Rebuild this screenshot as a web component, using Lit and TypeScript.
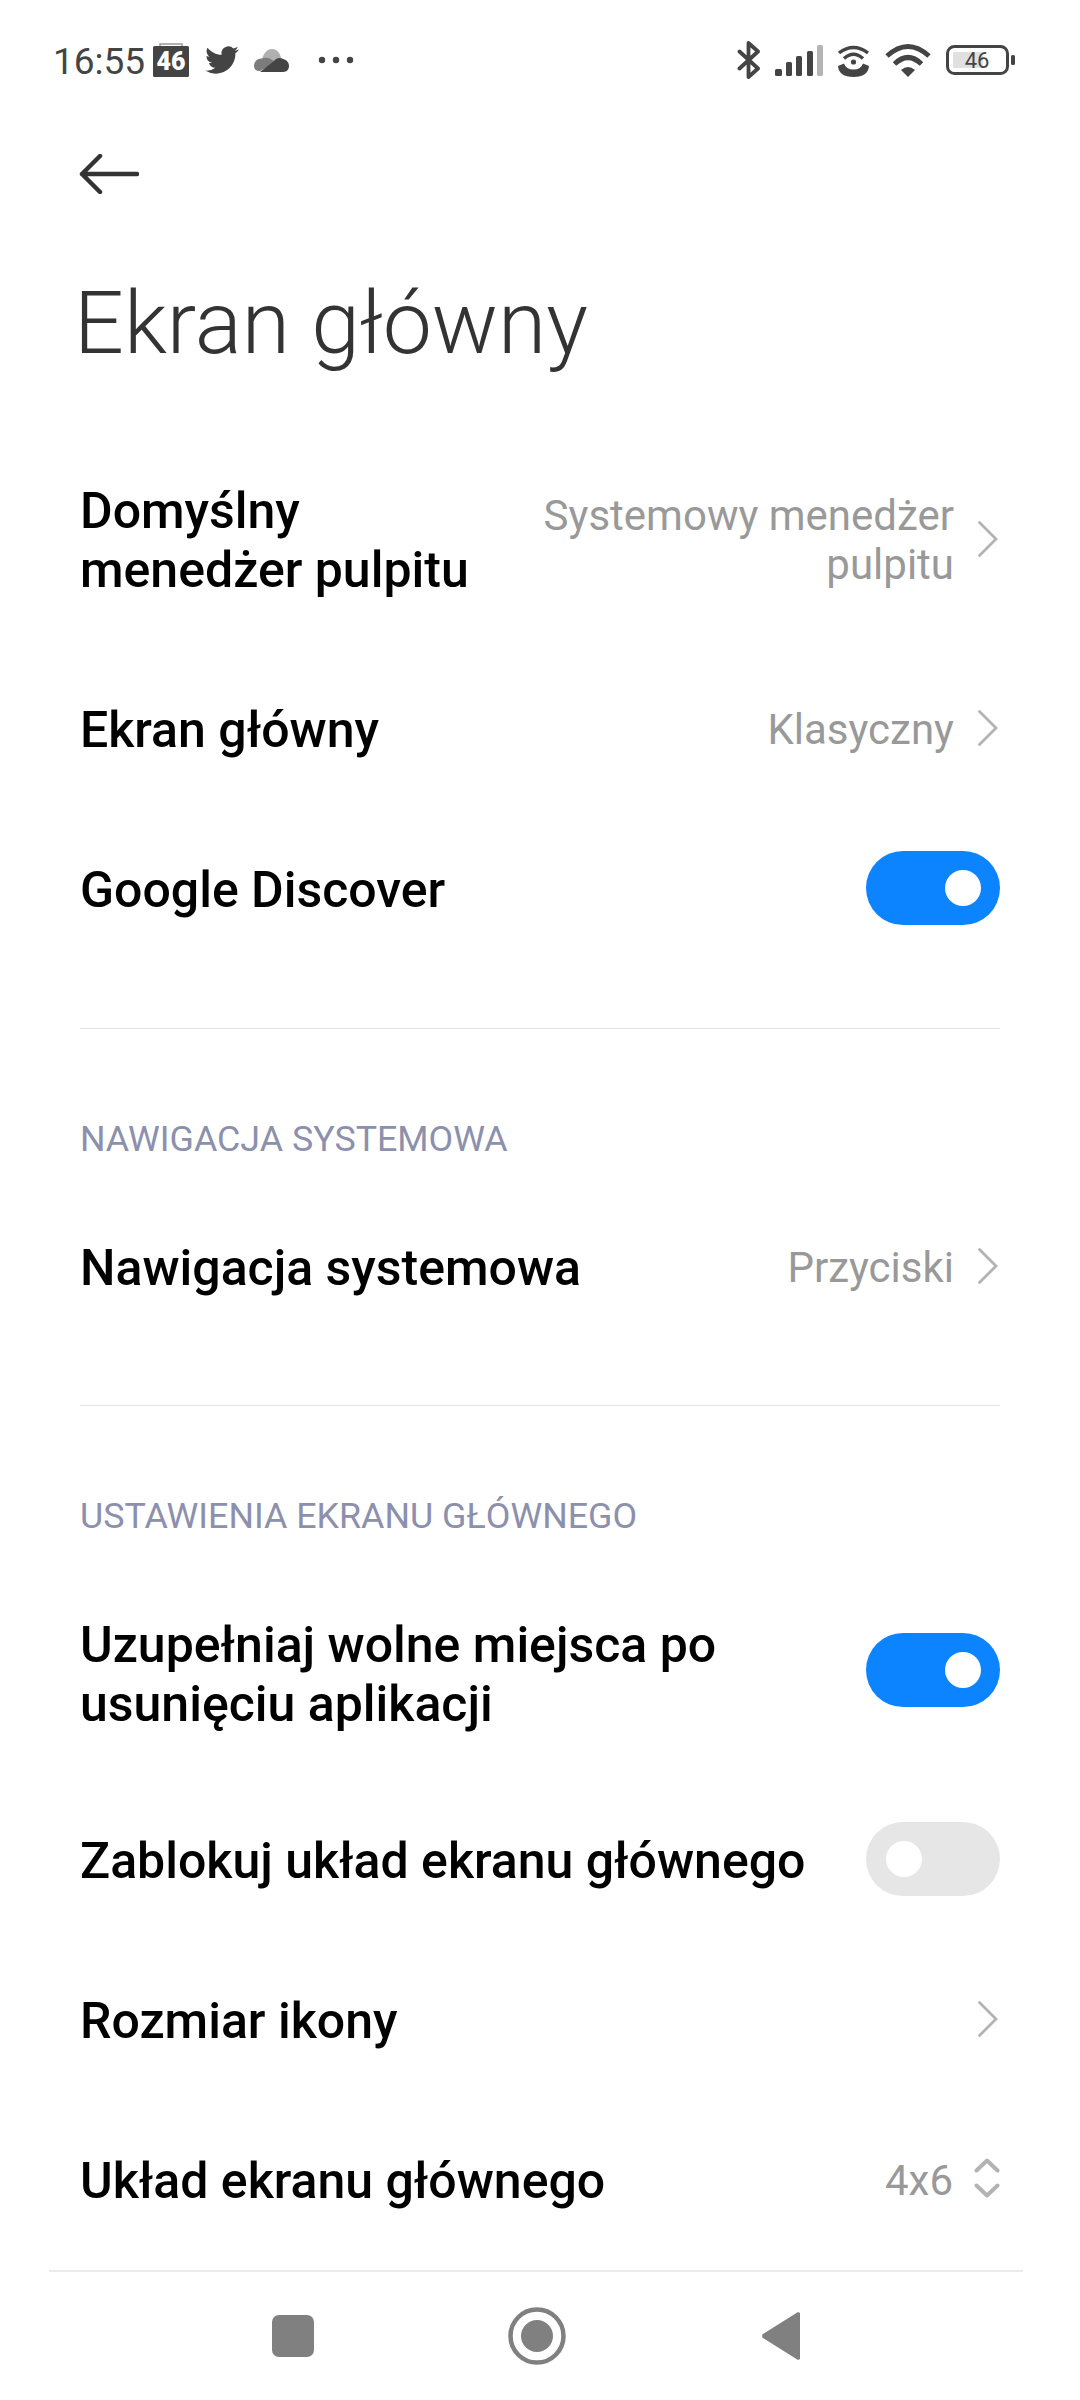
import { LitElement, css, html, svg } from 'lit';
import { customElement } from 'lit/decorators.js';

const chevron = html`<svg class="chev" viewBox="0 0 20 36" fill="none">
  <path d="M1.5 1.5 L18 18 L1.5 34.5" stroke="#b3b3b3" stroke-width="2.8" stroke-linecap="round" />
</svg>`;

const updown = html`<svg class="updown" viewBox="0 0 26 42" fill="none">
  <path d="M2.500 13.500 L13 3.500 L23.500 13.500 M2.500 28.500 L13 38.500 L23.500 28.500" stroke="#b3b3b3" stroke-width="4" stroke-linecap="round" stroke-linejoin="round" />
</svg>`;

const toggle = (on: boolean) =>
  html`<span class="toggle ${on ? 'on' : 'off'}"><span class="knob"></span></span>`;

const row = (label: unknown, trailing: unknown, rowClass = '') => html`
  <div class="row ${rowClass}">
    <div class="label">${label}</div>
    <div class="trailing">${trailing}</div>
  </div>
`;

const value = (text: unknown) => html`<span class="value">${text}</span>`;

@customElement('app-root')
export class AppRoot extends LitElement {
  static styles = css`
    :host {
      display: flex;
      flex-direction: column;
      width: 1080px;
      height: 2400px;
      background: #fff;
      font-family: Roboto, 'Liberation Sans', sans-serif;
      overflow: hidden;
    }

    .status {
      display: flex;
      align-items: center;
      justify-content: space-between;
      height: 36px;
      margin-top: 42px;
      padding: 0 65px 0 53px;
      color: #444;
    }
    .status-side {
      display: flex;
      align-items: center;
    }
    .time {
      font-size: 37px;
      line-height: 36px;
      padding-top: 3px;
      margin-right: 8px;
    }
    .ic-cal { width: 36px; height: 34px; margin-right: 16px; }
    .ic-tw { width: 34px; height: 28px; margin-right: 15px; }
    .ic-cloud { width: 35px; height: 23px; margin-right: 29px; }
    .ic-dots { width: 36px; height: 8px; }
    .ic-bt { width: 25px; height: 38px; margin-right: 13px; }
    .ic-sig { width: 48px; height: 31px; margin-right: 14px; }
    .ic-hot { width: 33px; height: 33px; margin-right: 15px; }
    .ic-wifi { width: 46px; height: 34px; margin-right: 15px; }
    .ic-bat { width: 69px; height: 30px; }

    .back {
      display: block;
      width: 60px;
      height: 40px;
      margin: 76px 0 0 79px;
    }

    h1 {
      margin: 76px 0 0 74px;
      font-size: 87.700px;
      line-height: 106px;
      font-weight: 300;
      color: #333;
    }

    .list {
      flex: 1;
      margin-top: 54px;
    }

    .row {
      display: flex;
      align-items: center;
      justify-content: space-between;
      height: 160px;
      padding: 0 80px;
    }
    .row.tall {
      height: 218px;
    }
    .label {
      padding-top: 4px;
      font-size: 50px;
      line-height: 59px;
      font-weight: 500;
      color: #000;
    }
    .row.low .label {
      padding-top: 9px;
    }
    .trailing {
      display: flex;
      align-items: center;
      flex-shrink: 0;
    }
    .value {
      padding-top: 2px;
      font-size: 42px;
      line-height: 49px;
      color: #999;
      text-align: right;
    }
    .chev {
      width: 20px;
      height: 36px;
      margin: 0 2px 0 24px;
    }
    .updown {
      width: 26px;
      height: 42px;
      margin: 0 0 2px 21px;
    }

    .toggle {
      position: relative;
      display: block;
      width: 134px;
      height: 74px;
      border-radius: 37px;
    }
    .toggle.on { background: #0d84ff; }
    .toggle.off { background: #e6e6e6; }
    .knob {
      position: absolute;
      top: 19px;
      width: 36px;
      height: 36px;
      border-radius: 50%;
      background: #fff;
    }
    .on .knob { right: 19px; }
    .off .knob { left: 20px; }

    .divider {
      height: 1px;
      margin: 0 80px;
      background: #e3e3e3;
    }
    .divider.first {
      margin-top: 60px;
    }
    .divider.second {
      margin-top: 59px;
    }
    .header {
      padding: 0 80px;
      margin-top: 87px;
      margin-bottom: 24px;
      height: 46px;
      font-size: 35.800px;
      line-height: 46px;
      color: #8c90ad;
    }
    .header.tight {
      margin-bottom: 22px;
    }

    .nav-line {
      height: 2px;
      margin: 0 57px 0 49px;
      background: #ebebeb;
    }
    .nav {
      display: grid;
      grid-template-columns: repeat(3, 244px);
      justify-content: center;
      justify-items: center;
      align-items: center;
      height: 128px;
      padding-right: 6px;
    }
    .nav svg { display: block; }
  `;

  render() {
    return html`
      <div class="status">
        <div class="status-side">
          <span class="time">16:55</span>
          <svg class="ic-cal" viewBox="0 0 36 34">
            <path d="M7 3 V1 H29 V3" fill="none" stroke="#999" stroke-width="1.5" />
            <rect y="3" width="36" height="31" rx="1.5" fill="#444" />
            <text x="18" y="27" text-anchor="middle" font-family="Roboto" font-weight="900" font-size="25" fill="#fff">46</text>
          </svg>
          <svg class="ic-tw" viewBox="0 0 24 20">
            <path fill="#444" transform="translate(0 -2)" d="M23.953 4.57a10 10 0 01-2.825.775 4.958 4.958 0 002.163-2.723c-.951.555-2.005.959-3.127 1.184a4.92 4.92 0 00-8.384 4.482C7.69 8.095 4.067 6.13 1.64 3.162a4.822 4.822 0 00-.666 2.475c0 1.71.87 3.213 2.188 4.096a4.904 4.904 0 01-2.228-.616v.06a4.923 4.923 0 003.946 4.827 4.996 4.996 0 01-2.212.085 4.936 4.936 0 004.604 3.417 9.867 9.867 0 01-6.102 2.105c-.39 0-.779-.023-1.17-.067a13.995 13.995 0 007.557 2.209c9.053 0 13.998-7.496 13.998-13.985 0-.21 0-.42-.015-.63A9.935 9.935 0 0024 4.59z" />
          </svg>
          <svg class="ic-cloud" viewBox="0 0 35 23">
            <path fill="#b0b0b0" d="M8 10 C10 3 14 0 18 0 C23 0 26 4 27 9 L18 13Z" />
            <path fill="#7c7c7c" d="M0 17 C0 12 4 9 8 9.500 C12 8 15 9 18 11 L22 13 L6 22 C2 22 0 20 0 17Z" />
            <path fill="#454545" d="M6 23 L20 12 C22 9 26 8 29 10 C33 11 35 14 35 17 C35 20 33 23 29 23Z" />
          </svg>
          <svg class="ic-dots" viewBox="0 0 36 8" fill="#444">
            <circle cx="4" cy="4" r="3.200" />
            <circle cx="18" cy="4" r="3.200" />
            <circle cx="32" cy="4" r="3.200" />
          </svg>
        </div>
        <div class="status-side">
          <svg class="ic-bt" viewBox="0 0 25 38" fill="none">
            <path d="M2.500 10.500 L21 27.500 L11.500 36 V2 L21 10.500 L2.500 27.500" stroke="#444" stroke-width="3.800" stroke-linejoin="round" stroke-linecap="round" />
          </svg>
          <svg class="ic-sig" viewBox="0 0 48 31">
            ${[
              [0, 24, 7, 7, '#444'],
              [11, 17, 6, 14, '#444'],
              [21, 11, 6, 20, '#444'],
              [32, 6, 6, 25, '#444'],
              [42, 0, 6, 31, '#b5b5b5'],
            ].map(
              ([x, y, w, h, c]) =>
                svg`<rect x=${x} y=${y} width=${w} height=${h} rx="1.500" fill=${c} />`,
            )}
          </svg>
          <svg class="ic-hot" viewBox="0 0 33 33" fill="none">
            <path d="M2 9 Q16.500 -2 31 9 M7 14.500 Q16.500 6 26 14.500" stroke="#444" stroke-width="3.400" />
            <circle cx="16.500" cy="18" r="2.600" fill="#444" />
            <path fill="#444" d="M1 22 L7 19.500 Q9 25.500 16.500 25.500 Q24 25.500 26 19.500 L32 22 Q31 33 16.500 33 Q2 33 1 22Z" />
          </svg>
          <svg class="ic-wifi" viewBox="0 0 46 34" fill="none">
            <path d="M2 13 Q23 -6 44 13 M9.500 21 Q23 8 36.500 21" stroke="#444" stroke-width="5" />
            <path fill="#444" d="M23 34 L16 27 Q23 21 30 27Z" />
          </svg>
          <svg class="ic-bat" viewBox="0 0 69 30">
            <rect x="1.500" y="1.500" width="60" height="27" rx="7" fill="none" stroke="#444" stroke-width="3" />
            <rect x="7" y="7" width="30" height="16" rx="2" fill="#e0e0e0" />
            <text x="31" y="23" text-anchor="middle" font-family="Roboto" font-size="22" fill="#444">46</text>
            <rect x="65" y="10" width="4" height="10" rx="1.500" fill="#444" />
          </svg>
        </div>
      </div>

      <svg class="back" viewBox="0 0 60 40" fill="none">
        <path d="M21 2 L3 20 L21 38 M3 20 H58" stroke="#333" stroke-width="4.500" stroke-linecap="round" stroke-linejoin="round" />
      </svg>
      <h1>Ekran główny</h1>

      <div class="list">
        ${row(
          html`Domyślny<br />menedżer pulpitu`,
          html`${value(html`Systemowy menedżer<br />pulpitu`)}${chevron}`,
          'tall',
        )}
        ${row('Ekran główny', html`${value('Klasyczny')}${chevron}`)}
        ${row('Google Discover', toggle(true))}
        <div class="divider first"></div>
        <div class="header">NAWIGACJA SYSTEMOWA</div>
        ${row('Nawigacja systemowa', html`${value('Przyciski')}${chevron}`)}
        <div class="divider second"></div>
        <div class="header tight">USTAWIENIA EKRANU GŁÓWNEGO</div>
        ${row(html`Uzupełniaj wolne miejsca po<br />usunięciu aplikacji`, toggle(true), 'tall low')}
        ${row('Zablokuj układ ekranu głównego', toggle(false))}
        ${row('Rozmiar ikony', chevron)}
        ${row('Układ ekranu głównego', html`${value('4x6')}${updown}`)}
      </div>

      <div class="nav-line"></div>
      <div class="nav">
        <svg width="42" height="42" viewBox="0 0 42 42">
          <rect width="42" height="42" rx="7" fill="#808080" />
        </svg>
        <svg width="58" height="58" viewBox="0 0 58 58">
          <circle cx="29" cy="29" r="26.500" fill="none" stroke="#808080" stroke-width="4.500" />
          <circle cx="29" cy="29" r="16" fill="#808080" />
        </svg>
        <svg width="38" height="48" viewBox="0 0 38 48">
          <path d="M38 1 V47 L36 48 L1 26 Q-1 24 1 22 L36 0Z" fill="#808080" />
        </svg>
      </div>
    `;
  }
}
